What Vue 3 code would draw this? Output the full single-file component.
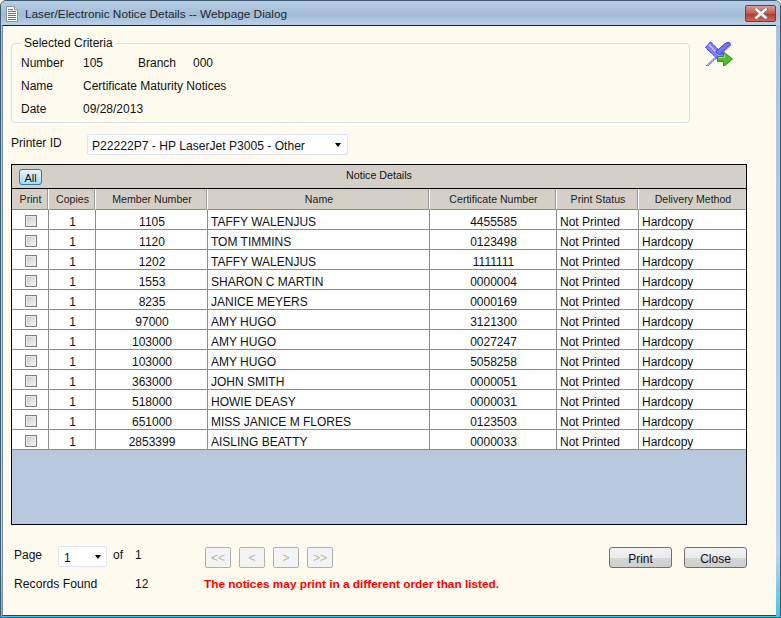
<script setup>
const rows = [
  ['1105', 'TAFFY WALENJUS', '4455585'],
  ['1120', 'TOM TIMMINS', '0123498'],
  ['1202', 'TAFFY WALENJUS', '1111111'],
  ['1553', 'SHARON C MARTIN', '0000004'],
  ['8235', 'JANICE MEYERS', '0000169'],
  ['97000', 'AMY HUGO', '3121300'],
  ['103000', 'AMY HUGO', '0027247'],
  ['103000', 'AMY HUGO', '5058258'],
  ['363000', 'JOHN SMITH', '0000051'],
  ['518000', 'HOWIE DEASY', '0000031'],
  ['651000', 'MISS JANICE M FLORES', '0123503'],
  ['2853399', 'AISLING BEATTY', '0000033']
]
</script>

<template>
  <div class="window">
    <div class="titlebar">
      <svg class="doc-icon" width="12" height="16" viewBox="0 0 12 16">
        <path d="M.5 .5h8l3 3v12h-11z" fill="#fff" stroke="#8a96a6" />
        <path d="M8.5 .5v3h3" fill="#dfe6ee" stroke="#8a96a6" />
        <path d="M2 3.5h5M2 5.5h8M2 7.5h8M2 9.5h8M2 11.5h8M2 13.5h8" stroke="#4f6fb5" />
      </svg>
      <span class="title">Laser/Electronic Notice Details -- Webpage Dialog</span>
      <div class="close-x">
        <svg width="14" height="11" viewBox="0 0 14 11">
          <path d="M2.5 1.5l9 8M11.5 1.5l-9 8" stroke="#777" stroke-width="4" stroke-linecap="square" />
          <path d="M2.5 1.5l9 8M11.5 1.5l-9 8" stroke="#f4f4f4" stroke-width="2.6" stroke-linecap="square" />
        </svg>
      </div>
    </div>

    <div class="body">
      <div class="top">
        <fieldset class="criteria">
          <legend>Selected Criteria</legend>
          <div class="crit-row first">
            <span class="lbl">Number</span><span class="val-short">105</span>
            <span class="lbl-branch">Branch</span><span>000</span>
          </div>
          <div class="crit-row">
            <span class="lbl">Name</span><span>Certificate Maturity Notices</span>
          </div>
          <div class="crit-row">
            <span class="lbl">Date</span><span>09/28/2013</span>
          </div>
        </fieldset>
        <svg class="exit-icon" width="28" height="25" viewBox="0 0 28 25">
          <path d="M1 25L24 3l2 1-23 21z" fill="#b4b4fa" stroke="#3a3aff" stroke-width=".8" stroke-dasharray="2 1" />
          <path d="M.5 6.5L5.5 .8l15 15-5 5z" fill="#8080f6" stroke="#2828ff" stroke-width="1" stroke-dasharray="3 1" />
          <path d="M4 3.5l13 14" stroke="#c8c8fc" stroke-width="1.5" />
          <path d="M20 2.5l4-1.5 1.5 2-11 11-4-3z" fill="#7474f4" stroke="#2828ff" stroke-width=".8" />
          <path d="M12.5 15.5h6v-4.5l9 7-7.5 6.5h-1.5v-4h-6z" fill="#55bb33" stroke="#2f8a1e" stroke-width="1" />
          <path d="M13.5 16.5h6v-3" fill="none" stroke="#a5e58a" stroke-width="1" />
        </svg>
      </div>

      <div class="printer">
        <span class="printer-lbl">Printer ID</span>
        <div class="select printer-select">
          <span>P22222P7 - HP LaserJet P3005 - Other</span>
          <i class="caret"></i>
        </div>
      </div>

      <div class="grid">
        <div class="grid-caption">
          <button class="all-btn">All</button>
          <span class="caption-text">Notice Details</span>
        </div>
        <div class="row head">
          <div>Print</div>
          <div>Copies</div>
          <div>Member Number</div>
          <div>Name</div>
          <div>Certificate Number</div>
          <div>Print Status</div>
          <div>Delivery Method</div>
        </div>
        <div v-for="(row, i) in rows" :key="i" class="row data">
          <div><span class="check"></span></div>
          <div>1</div>
          <div>{{ row[0] }}</div>
          <div class="left">{{ row[1] }}</div>
          <div>{{ row[2] }}</div>
          <div class="left">Not Printed</div>
          <div class="left">Hardcopy</div>
        </div>
      </div>

      <div class="footer">
        <div class="foot-left">
          <div class="pager">
            <span class="page-lbl">Page</span>
            <div class="select page-select">
              <span>1</span>
              <i class="caret"></i>
            </div>
            <span class="of">of</span>
            <span class="page-total">1</span>
            <div class="nav">
              <button disabled>&lt;&lt;</button>
              <button disabled>&lt;</button>
              <button disabled>&gt;</button>
              <button disabled>&gt;&gt;</button>
            </div>
          </div>
          <div class="records">
            <span class="rec-lbl">Records Found</span>
            <span class="rec-val">12</span>
            <span class="warn">The notices may print in a different order than listed.</span>
          </div>
        </div>
        <div class="actions">
          <button>Print</button>
          <button>Close</button>
        </div>
      </div>
    </div>
  </div>
</template>

<style>
html, body {
  margin: 0;
  background: #fffbef;
}
</style>

<style scoped>
.window {
  width: 781px;
  height: 618px;
  box-sizing: border-box;
  display: flex;
  flex-direction: column;
  font-family: "Liberation Sans", Arial, sans-serif;
  font-size: 12px;
  color: #111;
  background: linear-gradient(#a9c2dc, #bcd3e8 90%, #49c3e6);
  border: 1px solid #3d5a70;
  border-radius: 6px 6px 0 0;
  overflow: hidden;
}

.titlebar {
  height: 24px;
  box-sizing: border-box;
  flex: none;
  display: flex;
  align-items: center;
  padding: 1px 4px 0 5px;
  background: linear-gradient(#b6cde4, #a3bcd6 60%, #b9d0e6);
}

.doc-icon {
  margin-right: 7px;
}

.title {
  font-size: 11.8px;
  color: #1c2733;
}

.close-x {
  margin-left: auto;
  box-sizing: border-box;
  width: 31px;
  height: 17px;
  display: flex;
  align-items: center;
  justify-content: center;
  border: 1px solid #7a3a36;
  border-radius: 2px;
  background: linear-gradient(#d99a90, #c4574c 50%, #b23a30 55%, #cf6a5c);
}

.body {
  flex: 1;
  min-height: 0;
  margin: 0 4px 1px 1px;
  border-top: 1px solid #10202c;
  border-left: 1px solid #6f8ea8;
  border-bottom: 1px solid #1f4a5e;
  background: #fffbef;
  padding: 14px 0 0 8px;
  display: flex;
  flex-direction: column;
}

.top {
  display: flex;
  align-items: flex-start;
}

.criteria {
  width: 679px;
  height: 87px;
  box-sizing: border-box;
  margin: -4px 0 0;
  padding: 0 0 0 9px;
  border: 1px solid #d5dfe5;
  border-radius: 4px;
  min-inline-size: 0;
}

legend {
  padding: 0 3px;
  margin-left: 0;
  line-height: 14px;
}

.crit-row {
  display: flex;
  height: 23px;
  align-items: center;
}

.crit-row.first {
  box-sizing: border-box;
  height: 24px;
  padding-top: 2px;
}

.lbl {
  width: 62px;
}

.val-short {
  width: 55px;
}

.lbl-branch {
  width: 55px;
}

.exit-icon {
  margin: 1px 0 0 15px;
}

.printer {
  display: flex;
  align-items: center;
  margin-top: 11px;
}

.printer-lbl {
  width: 76px;
  margin-top: -4px;
}

.select {
  box-sizing: border-box;
  display: flex;
  align-items: center;
  justify-content: space-between;
  background: #fff;
  border: 1px solid #dfe5ee;
  border-radius: 2px;
  font-size: 12.1px;
}

.select > span {
  padding-top: 2px;
}

.printer-select {
  width: 261px;
  height: 21px;
  padding: 0 4px 0 4px;
}

.caret {
  width: 0;
  height: 0;
  border-left: 3.5px solid transparent;
  border-right: 3.5px solid transparent;
  border-top: 4px solid #000;
  margin-right: 2px;
}

.grid {
  box-sizing: border-box;
  width: 736px;
  height: 361px;
  margin-top: 9px;
  border: 1px solid #000;
  background: #b7c8df;
}

.grid-caption {
  height: 24px;
  box-sizing: border-box;
  display: flex;
  align-items: center;
  position: relative;
  background: #d4d0c8;
  border-bottom: 1px solid #000;
}

.caption-text {
  position: absolute;
  left: 0;
  right: 0;
  text-align: center;
  top: 4px;
  font-size: 10.7px;
}

.all-btn {
  position: relative;
  z-index: 1;
  width: 23px;
  height: 16px;
  margin-left: 7px;
  padding: 2px 0 0;
  font: 11px "Liberation Sans", Arial, sans-serif;
  color: #111;
  border: 1px solid #2a7fb0;
  border-radius: 3px;
  background: linear-gradient(#e6f5fd, #a9d9f3);
}

.row {
  display: grid;
  grid-template-columns: 37px 47px 112px 222px 127px 82px 107px;
}

.row > div {
  box-sizing: border-box;
  display: flex;
  align-items: center;
  justify-content: center;
  white-space: nowrap;
  padding-left: 1px;
}

.head {
  height: 21px;
  background: #d4d0c8;
  font-size: 10.6px;
  color: #222;
}

.head > div {
  border-right: 1px solid #fff;
  border-bottom: 1px solid #8c8c8c;
  box-shadow: inset -1px 0 0 #9a9a9a;
}

.head > div:last-child {
  border-right: 0;
  box-shadow: none;
}

.data {
  height: 20px;
  background: #fff;
}

.data > div {
  padding-top: 4px;
  border-right: 1px solid #8c8c8c;
  border-bottom: 1px solid #8c8c8c;
}

.data > div:last-child {
  border-right: 0;
}

.data > .left {
  justify-content: flex-start;
  padding-left: 3px;
}

.check {
  width: 12px;
  height: 12px;
  margin-top: -1px;
  box-sizing: border-box;
  border: 1px solid #7f8080;
  background: linear-gradient(135deg, #c6c9ce, #f6f6f8);
  box-shadow: inset 0 0 0 1px #e8e8ea;
}

.footer {
  display: flex;
  justify-content: space-between;
  width: 736px;
  margin-top: 22px;
}

.pager {
  display: flex;
  align-items: center;
  height: 21px;
}

.page-lbl {
  padding-left: 3px;
  width: 44px;
  margin-top: -5px;
}

.page-select {
  width: 49px;
  height: 21px;
  padding: 0 3px 0 5px;
  margin-bottom: 2px;
}

.of {
  margin-left: 6px;
  width: 22px;
  margin-top: -5px;
}

.page-total {
  width: 70px;
  margin-top: -5px;
}

.nav {
  display: flex;
  gap: 8px;
}

.nav button {
  width: 26px;
  height: 21px;
  padding: 0;
  font: 12px "Liberation Sans", Arial, sans-serif;
  color: #b5b5b5;
  background: #f4f4f4;
  border: 1px solid #b0b0b0;
  border-radius: 2px;
}

.records {
  display: flex;
  margin-top: 9px;
  padding-left: 3px;
}

.rec-lbl {
  width: 121px;
  font-size: 12.2px;
}

.rec-val {
  width: 69px;
}

.warn {
  color: #f00;
  font-weight: 700;
  font-size: 11.8px;
}

.actions {
  display: flex;
  gap: 12px;
}

.actions button {
  width: 63px;
  height: 21px;
  padding: 2px 0 0;
  font: 12px "Liberation Sans", Arial, sans-serif;
  color: #111;
  border: 1px solid #707070;
  border-radius: 3px;
  background: linear-gradient(#f2f2f2, #ebebeb 50%, #d6d6d6 50%, #cfcfcf);
}
</style>
